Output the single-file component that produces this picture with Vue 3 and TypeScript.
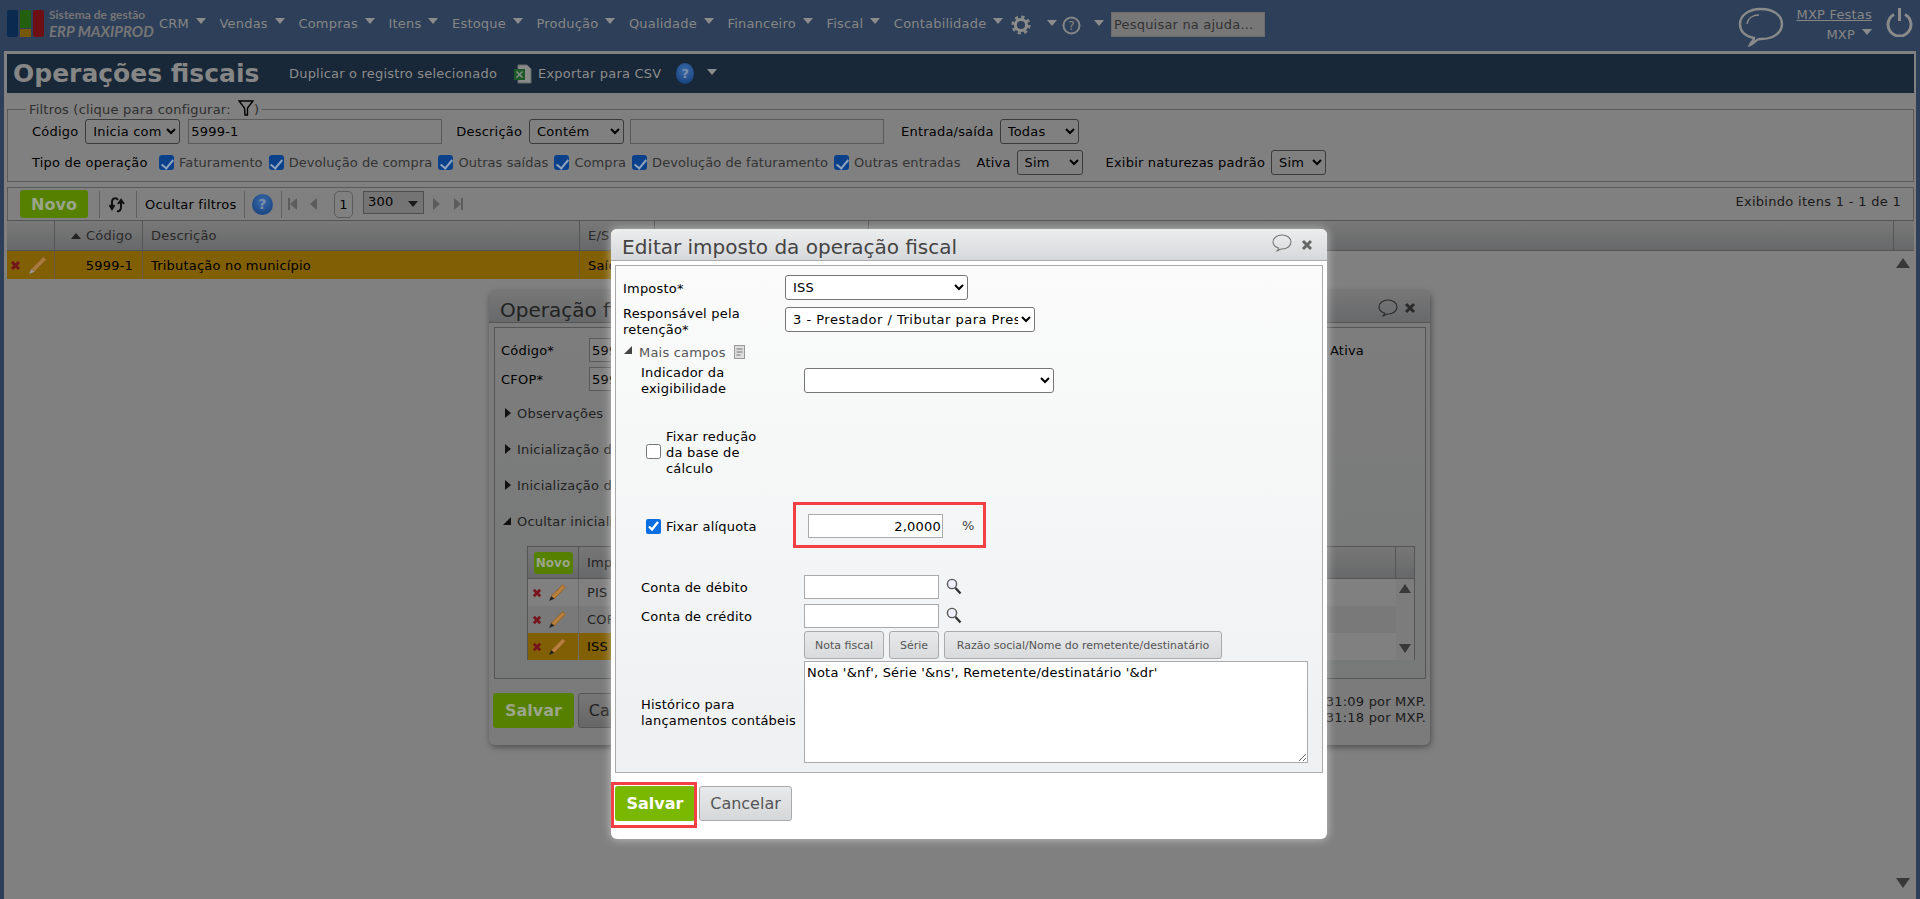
<script setup lang="ts">
const menus: string[] = ['CRM', 'Vendas', 'Compras', 'Itens', 'Estoque', 'Produção', 'Qualidade', 'Financeiro', 'Fiscal', 'Contabilidade']
const tipos: string[] = ['Faturamento', 'Devolução de compra', 'Outras saídas', 'Compra', 'Devolução de faturamento', 'Outras entradas']
const impostos: { nome: string; cls: string }[] = [
  { nome: 'PIS', cls: '' },
  { nome: 'COFINS', cls: 'alt' },
  { nome: 'ISS', cls: 'sel' }
]
const secoes: string[] = ['Observações', 'Inicialização de campos', 'Inicialização de campos']
</script>

<template>
  <div class="page">
    <header class="topbar">
      <div class="logo">
        <span class="bar blue"></span>
        <span class="bar mid"><i class="g"></i><i class="y"></i></span>
        <span class="bar red"></span>
      </div>
      <div class="brand">
        <span class="b1">Sistema de gestão</span>
        <span class="b2">ERP MAXIPROD</span>
      </div>
      <nav class="menu">
        <span v-for="m in menus" :key="m" class="mi">{{ m }}<i class="caret"></i></span>
      </nav>
      <svg class="gear" width="20" height="20" viewBox="0 0 20 20">
        <circle cx="10" cy="10" r="7.6" fill="none" stroke="#868686" stroke-width="4" stroke-dasharray="3 2.97" />
        <circle cx="10" cy="10" r="5.6" fill="none" stroke="#8c8c8c" stroke-width="3" />
      </svg>
      <i class="caret c-gear"></i>
      <svg class="qm" width="19" height="19" viewBox="0 0 19 19">
        <circle cx="9.5" cy="9.5" r="8" fill="none" stroke="#868686" stroke-width="2" />
        <text x="9.5" y="14" text-anchor="middle" font-size="12" fill="#868686" font-family="DejaVu Sans">?</text>
      </svg>
      <i class="caret c-qm"></i>
      <input class="help-search" placeholder="Pesquisar na ajuda..." />
      <div class="top-right">
        <svg width="46" height="40" viewBox="0 0 46 40">
          <path d="M13 36 C15 34 16 33 16 31 C7 29 2 24 2 17 C2 8 11 2 23 2 C35 2 44 8 44 17 C44 26 35 32 23 32 C21 32 20 32 19 33 C17 35 15 37 12 38 Z" fill="none" stroke="#8a8a8a" stroke-width="2.4" />
          <path d="M9 17 C10 11 15 8 21 8" fill="none" stroke="#8a8a8a" stroke-width="1.4" />
        </svg>
        <div class="user">
          <a class="u1">MXP Festas</a>
          <span class="u2">MXP<i class="caret"></i></span>
        </div>
        <svg class="power" width="27" height="30" viewBox="0 0 27 30">
          <path d="M8 7.5 A11.5 11.5 0 1 0 19 7.5" fill="none" stroke="#8a8a8a" stroke-width="3" />
          <path d="M13.5 1 V14" stroke="#8a8a8a" stroke-width="3" />
        </svg>
      </div>
    </header>

    <main class="frame">
      <div class="titlebar">
        <h1 class="ttl">Operações fiscais</h1>
        <span class="tl a1">Duplicar o registro selecionado</span>
        <svg class="xls" width="19" height="20" viewBox="0 0 19 20">
          <path d="M5 1 H14 L18 5 V19 H5 Z" fill="#8a8a8a" stroke="#666" />
          <rect x="1" y="5" width="11" height="11" fill="#1c5a28" />
          <path d="M3.5 7.5 L9.5 13.5 M9.5 7.5 L3.5 13.5" stroke="#8a8a8a" stroke-width="1.5" />
        </svg>
        <span class="tl a2">Exportar para CSV</span>
        <span class="qball q-title">?</span>
        <i class="caret c-title"></i>
      </div>

      <fieldset class="filters">
        <legend class="lg">Filtros (clique para configurar:
          <svg class="funnel" width="16" height="16" viewBox="0 0 16 16">
            <path d="M1 1 H15 L9.5 8 V15 H7 L6.5 8 Z" fill="none" stroke="#000" stroke-width="1.4" />
          </svg>)</legend>
        <div class="frow r1">
          <span>Código</span>
          <select class="ctl s1"><option>Inicia com</option></select>
          <input class="inp i1" value="5999-1" />
          <span class="m17">Descrição</span>
          <select class="ctl s2"><option>Contém</option></select>
          <input class="inp i2" />
          <span class="m18">Entrada/saída</span>
          <select class="ctl s3"><option>Todas</option></select>
        </div>
        <div class="frow r2">
          <span class="tipo">Tipo de operação</span>
          <label v-for="t in tipos" :key="t" class="ck"><input type="checkbox" checked /><span>{{ t }}</span></label>
          <span class="ativa">Ativa</span>
          <select class="ctl s4"><option>Sim</option></select>
          <span class="exibir">Exibir naturezas padrão</span>
          <select class="ctl s5"><option>Sim</option></select>
        </div>
      </fieldset>

      <div class="toolbar">
        <button class="novo">Novo</button>
        <span class="sep s-a"></span>
        <svg class="refresh" width="18" height="18" viewBox="0 0 18 18">
          <path d="M9 5 C7 2 3 3 3 7 V13 M0.5 10 L3 14 L5.5 10" fill="none" stroke="#111" stroke-width="2" />
          <path d="M8 16 C11 17 12 14 12 12 V6 M9 9 L12 5 L15 9" fill="none" stroke="#111" stroke-width="2" />
        </svg>
        <span class="sep s-b"></span>
        <span class="ocultar">Ocultar filtros</span>
        <span class="sep s-c"></span>
        <span class="qball q-tool">?</span>
        <span class="sep s-d"></span>
        <i class="pg first"></i>
        <i class="pg prev"></i>
        <span class="pnum">1</span>
        <span class="psize">300<i class="pcaret"></i></span>
        <i class="pg next"></i>
        <i class="pg last"></i>
        <span class="exibindo">Exibindo itens 1 - 1 de 1</span>
      </div>

      <div class="grid ghead">
        <div></div>
        <div class="hc"><i class="up"></i>Código</div>
        <div class="hc">Descrição</div>
        <div class="hc">E/S</div>
        <div class="hc"></div>
        <div class="hc"></div>
        <div></div>
      </div>
      <div class="grid grow">
        <div class="acts">
          <svg width="11" height="11" viewBox="0 0 11 11"><path d="M2 2 L9 9 M9 2 L2 9" stroke="#76141c" stroke-width="3" /></svg>
          <svg width="20" height="20" viewBox="0 0 18 18"><path d="M14 1.5 L16.5 4 L6 15 L3 12.5 Z" fill="#a87a3c" stroke="#8a5c20" stroke-width=".8" /><path d="M3 12.5 L1 17 L6 15 Z" fill="#999" /></svg>
        </div>
        <div class="rc num">5999-1</div>
        <div class="rc">Tributação no município</div>
        <div class="rc">Saída</div>
        <div class="rc"></div>
      </div>
      <i class="arrow-up"></i>
      <i class="arrow-down"></i>
    </main>

    <section class="dlg dlg2">
      <div class="dhead"><span class="dtitle">Operação fiscal</span></div>
      <div class="dpanel">
        <div class="drow first-row">
          <span class="dlabel">Código*</span><input class="inp di" value="5999-1" />
          <span class="ativa2">Ativa</span>
        </div>
        <div class="drow cfop-row">
          <span class="dlabel">CFOP*</span><input class="inp di" value="5999" />
        </div>
        <div v-for="s in secoes" :key="s" class="sec"><i class="tri-r"></i>{{ s }}</div>
        <div class="sec open"><i class="tri-d"></i>Ocultar inicialização</div>
        <div class="itable">
          <div class="igrid ihead">
            <div class="ic1"><button class="novo-s">Novo</button></div>
            <div class="ic2">Imposto</div>
            <div></div>
            <div class="ic3"></div>
          </div>
          <div v-for="i in impostos" :key="i.nome" class="igrid irow" :class="i.cls">
            <div class="ic1 iacts">
              <svg width="10" height="10" viewBox="0 0 11 11"><path d="M2 2 L9 9 M9 2 L2 9" stroke="#76141c" stroke-width="3" /></svg>
              <svg width="19" height="19" viewBox="0 0 18 18"><path d="M14 1.5 L16.5 4 L6 15 L3 12.5 Z" fill="#b8803c" stroke="#8a5c20" stroke-width=".8" /><path d="M3 12.5 L1 17 L6 15 Z" fill="#222" /></svg>
            </div>
            <div class="ic2">{{ i.nome }}</div>
            <div></div>
            <div class="ic3"></div>
          </div>
          <i class="ia up2"></i>
          <i class="ia down2"></i>
        </div>
      </div>
      <div class="dfoot">
        <button class="salvar2">Salvar</button>
        <button class="cancel2">Cancelar</button>
        <div class="stamps"><span>Criado em 12/05/2021 às 14:31:09 por MXP.</span><span>Alterado em 12/05/2021 às 14:31:18 por MXP.</span></div>
      </div>
      <svg class="dchat" width="20" height="19" viewBox="0 0 20 19">
        <path d="M5 17 C6 16 6.5 15 6.5 14 C3 13 1 11 1 8 C1 4 5 1 10 1 C15 1 19 4 19 8 C19 12 15 15 10 15 C9 15 8 15 7.5 15.5 C7 16.5 6 17 5 17 Z" fill="none" stroke="#2a2a2a" stroke-width="1.1" />
      </svg>
      <svg class="dx" width="12" height="12" viewBox="0 0 12 12"><path d="M2 2 L10 10 M10 2 L2 10" stroke="#2a2a2a" stroke-width="3" /></svg>
    </section>

    <section class="dlg dlg1">
      <div class="mhead">
        <span class="mtitle">Editar imposto da operação fiscal</span>
        <svg class="mchat" width="20" height="19" viewBox="0 0 20 19">
          <path d="M5 17 C6 16 6.5 15 6.5 14 C3 13 1 11 1 8 C1 4 5 1 10 1 C15 1 19 4 19 8 C19 12 15 15 10 15 C9 15 8 15 7.5 15.5 C7 16.5 6 17 5 17 Z" fill="none" stroke="#777" stroke-width="1.1" />
        </svg>
        <svg class="mx" width="12" height="12" viewBox="0 0 12 12"><path d="M2 2 L10 10 M10 2 L2 10" stroke="#666" stroke-width="3" /></svg>
      </div>
      <div class="mpanel">
        <div class="mrow">
          <span class="ml">Imposto*</span>
          <select class="ctl mc sel-a"><option>ISS</option></select>
        </div>
        <div class="mrow mt7">
          <span class="ml two">Responsável pela retenção*</span>
          <select class="ctl mc sel-b"><option>3 - Prestador / Tributar para Prestador</option></select>
        </div>
        <div class="mais"><i class="tri-d small"></i><span>Mais campos</span>
          <svg class="doc" width="11" height="14" viewBox="0 0 11 14"><rect x="0.5" y="0.5" width="10" height="13" fill="#ddd" stroke="#999" /><path d="M2.5 4 H8.5 M2.5 7 H8.5 M2.5 10 H6.5" stroke="#777" /></svg>
        </div>
        <div class="sub">
          <div class="srow ind">
            <span class="sl">Indicador da exigibilidade</span>
            <select class="ctl mc sel-c"><option></option></select>
          </div>
          <label class="fix-red"><input type="checkbox" /><span>Fixar redução da base de cálculo</span></label>
          <div class="srow aliq">
            <label class="fix-al sl"><input type="checkbox" checked /><span>Fixar alíquota</span></label>
            <input class="minp num-in" value="2,0000" /><span class="pct">%</span>
          </div>
          <div class="srow conta">
            <span class="sl low">Conta de débito</span><input class="minp small-in" />
            <svg class="lens" width="16" height="17" viewBox="0 0 16 17"><circle cx="6" cy="6" r="4.6" fill="#eef" stroke="#555" stroke-width="1.4" /><path d="M9.5 10 L14.5 15.5" stroke="#333" stroke-width="2.4" /></svg>
          </div>
          <div class="srow conta2">
            <span class="sl low">Conta de crédito</span><input class="minp small-in" />
            <svg class="lens" width="16" height="17" viewBox="0 0 16 17"><circle cx="6" cy="6" r="4.6" fill="#eef" stroke="#555" stroke-width="1.4" /><path d="M9.5 10 L14.5 15.5" stroke="#333" stroke-width="2.4" /></svg>
          </div>
          <div class="chips">
            <button class="chip c1">Nota fiscal</button>
            <button class="chip c2">Série</button>
            <button class="chip c3">Razão social/Nome do remetente/destinatário</button>
          </div>
          <div class="srow hist">
            <span class="sl low">Histórico para lançamentos contábeis</span>
            <textarea class="ta">Nota '&amp;nf', Série '&amp;ns', Remetente/destinatário '&amp;dr'</textarea>
          </div>
        </div>
      </div>
      <div class="mfoot">
        <button class="salvar">Salvar</button>
        <button class="cancelar">Cancelar</button>
      </div>
      <div class="redbox rb1"></div>
      <div class="redbox rb2"></div>
    </section>
  </div>
</template>

<style>
html, body { margin: 0; background: #2e4059; }
</style>

<style scoped>
.page { position: relative; width: 1920px; height: 899px; overflow: hidden; background: #2e4059; font: 13px "DejaVu Sans", sans-serif; letter-spacing: .2px; color: #000; }
.page * { box-sizing: border-box; }

.topbar { display: flex; align-items: flex-start; height: 51px; padding: 10px 0 0 7px; color: #868686; }
.logo { display: flex; gap: 2px; width: 37px; height: 27px; }
.bar { width: 11px; height: 27px; border-radius: 2px; display: block; }
.blue { background: #0a2b4f; }
.red { background: #6e0f14; }
.mid { display: flex; flex-direction: column; gap: 1px; width: 11px; }
.mid .g { height: 18px; background: #235f0f; border-radius: 2px 2px 0 0; }
.mid .y { height: 8px; background: #775808; }
.brand { display: flex; flex-direction: column; margin-left: 5px; width: 100px; font-family: Lato, sans-serif; font-weight: 700; color: #757575; letter-spacing: 0; }
.b1 { font-size: 12px; line-height: 12px; margin-top: -1px; }
.b2 { font-size: 15px; line-height: 15px; margin-top: 3px; font-style: italic; white-space: nowrap; }
.menu { display: flex; margin-left: 10px; padding-top: 6px; }
.mi { display: flex; align-items: flex-start; margin-right: 13.6px; line-height: 16px; white-space: nowrap; }
.caret { display: inline-block; width: 0; height: 0; border-left: 5px solid transparent; border-right: 5px solid transparent; border-top: 6px solid #8c8c8c; }
.mi .caret { margin: 2px 0 0 7px; }
.gear { margin: 5px 0 0 -6px; }
.c-gear { margin: 10px 0 0 16px; }
.qm { margin: 6px 0 0 5px; }
.c-qm { margin: 10px 0 0 13px; }
.help-search { width: 154px; height: 25px; margin: 2px 0 0 7px; border: 1px solid #6c6c6c; background: #777; font: 13px "DejaVu Sans", sans-serif; letter-spacing: .2px; padding: 0 2px; outline: 0; }
.help-search::placeholder { color: #333; opacity: 1; }
.top-right { display: flex; margin-left: auto; align-items: flex-start; margin-top: -3px; }
.user { display: flex; flex-direction: column; align-items: flex-end; margin-left: 12px; width: 76px; line-height: 16px; }
.u1 { text-decoration: underline; white-space: nowrap; }
.u2 { margin-top: 4px; display: flex; }
.u2 .caret { margin: 2px 0 0 7px; }
.power { margin: 0 7px 0 14px; }

.frame { position: relative; height: 848px; margin: 0 4px; background: #808080; border-top: 3px solid #808080; border-left: 3px solid #808080; border-right: 2px solid #808080; }
.titlebar { display: flex; align-items: center; height: 39px; background: #182838; color: #8c8c8c; }
.ttl { margin: 0 0 0 6px; width: 276px; font-size: 25px; font-weight: 700; color: #868686; white-space: nowrap; letter-spacing: 0; }
.xls { margin-left: 16px; }
.tl { white-space: nowrap; }
.a2 { margin-left: 6px; }
.qball { display: flex; align-items: center; justify-content: center; border-radius: 50%; background: radial-gradient(circle at 50% 35%, #3a6aa8, #123a78); color: #7d8fa8; font-weight: 700; }
.q-title { width: 18px; height: 21px; margin-left: 15px; font-size: 13px; }
.c-title { margin-left: 13px; margin-top: -3px; }

.filters { margin: 7px 0 0; padding: 0 0 7px 24px; height: 82px; width: 1907px; border: 1px solid #5a5a5a; min-width: 0; }
.lg { margin-left: -6px; padding: 0 3px; color: #2e2e2e; line-height: 16px; white-space: nowrap; }
.funnel { vertical-align: -2px; margin-left: 3px; }
.frow { display: flex; align-items: center; white-space: nowrap; }
.r1 { margin-top: 1px; height: 25px; }
.r2 { margin-top: 6px; height: 25px; }
.ctl { height: 25px; border: 1px solid #3b3b3b; border-radius: 3px; background: #808080; color: #000; font: 13px "DejaVu Sans", sans-serif; letter-spacing: .2px; padding: 0 0 0 3px; }
.inp { height: 25px; border: 1px solid #5a5a5a; background: #808080; font: 13px "DejaVu Sans", sans-serif; letter-spacing: .2px; padding: 0 2px; outline: 0; color: #000; }
.s1 { width: 95px; margin-left: 7px; }
.i1 { width: 254px; margin-left: 8px; }
.m17 { margin-left: 14px; }
.s2 { width: 95px; margin-left: 7px; }
.i2 { width: 254px; margin-left: 6px; }
.m18 { margin-left: 17px; }
.s3 { width: 79px; margin-left: 6px; }
.tipo { width: 114px; margin-right: 13px; }
.ck { display: flex; align-items: center; color: #333; margin-right: 6px; letter-spacing: .07px; }
.ck input { appearance: none; position: relative; width: 15px; height: 15px; margin: 0 5px 0 0; border-radius: 3px; background: #0a418a; }
.ck input::after { content: ""; position: absolute; left: 4.5px; top: 1.5px; width: 5px; height: 10px; border: solid #8fa3bd; border-width: 0 2px 2px 0; transform: rotate(40deg); }
.ativa { margin-left: 10px; }
.s4 { width: 66px; margin-left: 6px; }
.exibir { margin-left: 23px; }
.s5 { width: 55px; margin-left: 6px; }

.toolbar { display: flex; align-items: center; height: 33px; margin-top: 5px; border: 1px solid #5a5a5a; border-width: 1px 1px 0; width: 1907px; padding-left: 12px; }
.novo { width: 68px; height: 28px; border: 0; border-radius: 3px; background: #558000; color: #9aa58a; font: 700 16px "DejaVu Sans", sans-serif; padding: 0; }
.sep { width: 1px; height: 27px; background: #606060; }
.s-a { margin-left: 11px; }
.refresh { margin-left: 9px; }
.s-b { margin-left: 9px; }
.ocultar { margin-left: 8px; width: 91px; white-space: nowrap; }
.s-c { margin-left: 8px; }
.q-tool { width: 21px; height: 21px; margin-left: 7px; font-size: 14px; }
.s-d { margin-left: 8px; }
.pg { display: inline-block; width: 0; height: 0; border-top: 6px solid transparent; border-bottom: 6px solid transparent; }
.first { margin-left: 8px; border-right: 7px solid #5c5c5c; box-shadow: -2px 0 0 0 #5c5c5c; }
.prev { margin-left: 13px; border-right: 7px solid #5c5c5c; }
.pnum { margin-left: 17px; width: 19px; height: 27px; border: 1px solid #5c5c5c; border-radius: 5px; display: flex; align-items: center; justify-content: center; }
.psize { margin-left: 10px; width: 61px; height: 23px; background: #747474; border: 1px solid #4e4e4e; padding-left: 4px; line-height: 19px; position: relative; margin-top: -3px; }
.pcaret { position: absolute; right: 5px; top: 9px; border-left: 5px solid transparent; border-right: 5px solid transparent; border-top: 6px solid #1a1a1a; }
.next { margin-left: 9px; border-left: 7px solid #5c5c5c; }
.last { margin-left: 14px; border-left: 7px solid #5c5c5c; box-shadow: 2px 0 0 0 #5c5c5c; }
.exibindo { margin-left: auto; margin-right: 12px; margin-top: -6px; white-space: nowrap; color: #1a1a1a; letter-spacing: .3px; }

.grid { display: grid; grid-template-columns: 48px 88px 437px 75px 214px 1025px 20px; width: 1907px; }
.ghead { height: 31px; background: linear-gradient(#797979, #676869); border: 1px solid #555; border-width: 1px 0; }
.ghead > div { border-right: 1px solid #555; }
.ghead > div:last-child { border-right: 0; }
.hc { display: flex; align-items: center; padding-left: 8px; color: #2a2a2a; }
.up { width: 0; height: 0; border-left: 5px solid transparent; border-right: 5px solid transparent; border-bottom: 6px solid #222; margin: 0 5px 0 8px; }
.grow { height: 28px; }
.grow > div { background: #805f05; border-right: 1px solid #6a5a3a; }
.grow > div:last-child { border-right: 0; }
.acts { display: flex; align-items: center; gap: 7px; padding-left: 3px; }
.rc { display: flex; align-items: center; padding-left: 8px; white-space: nowrap; }
.num { justify-content: flex-end; padding-right: 9px; }
.arrow-up { position: absolute; right: 4px; top: 204px; border-left: 7px solid transparent; border-right: 7px solid transparent; border-bottom: 10px solid #383838; }
.arrow-down { position: absolute; right: 4px; bottom: 11px; border-left: 7px solid transparent; border-right: 7px solid transparent; border-top: 10px solid #383838; }

.dlg { position: absolute; border-radius: 6px; }
.dlg2 { left: 489px; top: 291px; width: 941px; height: 454px; background: #7b7b7b; box-shadow: 1px 2px 6px rgba(0,0,0,.4); }
.dhead { height: 32px; background: linear-gradient(#777778, #68696a); border-bottom: 1px solid #555; border-radius: 6px 6px 0 0; padding-left: 11px; }
.dtitle { font-size: 20px; line-height: 38px; color: #222; letter-spacing: 0; }
.dchat { position: absolute; right: 32px; top: 8px; }
.dx { position: absolute; right: 14px; top: 11px; }
.dpanel { position: relative; margin: 4px 4px 0 5px; height: 352px; border: 1px solid #555; background: linear-gradient(#7d7d7d, #777878); padding: 10px 0 0 6px; }
.drow { display: flex; align-items: center; height: 24px; }
.cfop-row { margin-top: 5px; }
.dlabel { width: 88px; }
.di { width: 200px; height: 24px; }
.ativa2 { position: absolute; right: 5px; top: 15px; width: 90px; }
.sec { position: relative; height: 36px; padding-left: 16px; line-height: 16px; color: #222; display: flex; align-items: flex-start; white-space: nowrap; }
.cfop-row + .sec { margin-top: 15px; }
.tri-r { position: absolute; left: 4px; top: 2px; border-top: 5px solid transparent; border-bottom: 5px solid transparent; border-left: 6px solid #111; }
.tri-d { position: absolute; left: 2px; top: 3px; border-left: 8px solid transparent; border-bottom: 8px solid #111; }
.open { height: 32px; }
.itable { position: relative; margin-left: 26px; width: 888px; height: 114px; border: 1px solid #555; }
.igrid { display: grid; grid-template-columns: 51px 400px 417px 18px; }
.ihead { height: 32px; background: linear-gradient(#777, #676869); border-bottom: 1px solid #555; }
.ihead > div { border-right: 1px solid #555; }
.ihead > div:nth-child(2), .ihead > div:last-child { border-right: 0; }
.ic2 { display: flex; align-items: center; padding-left: 8px; white-space: nowrap; color: #222; }
.ic1 { display: flex; align-items: center; justify-content: center; }
.novo-s { width: 39px; height: 22px; background: #558000; color: #9aa58a; border: 0; border-radius: 3px; font: 700 12px "DejaVu Sans", sans-serif; padding: 0; letter-spacing: 0; }
.irow { height: 27px; background: #808080; }
.irow .ic1 { border-right: 1px solid #6c6c6c; justify-content: flex-start; padding-left: 4px; }
.alt { background: #797979; }
.sel .ic1, .sel .ic2 { background: #805f05; color: #000; }
.irow .ic3 { background: #7c7c7c; }
.iacts { gap: 6px; }
.ia { position: absolute; right: 3px; }
.up2 { top: 37px; border-left: 6px solid transparent; border-right: 6px solid transparent; border-bottom: 9px solid #383838; }
.down2 { bottom: 6px; border-left: 6px solid transparent; border-right: 6px solid transparent; border-top: 9px solid #383838; }
.dfoot { display: flex; align-items: flex-start; margin: 14px 4px 0 4px; }
.salvar2 { width: 81px; height: 35px; background: #558000; color: #9aa58a; border: 0; border-radius: 3px; font: 700 16px "DejaVu Sans", sans-serif; }
.cancel2 { width: 92px; height: 35px; margin-left: 4px; background: linear-gradient(#777, #666); color: #222; border: 1px solid #555; border-radius: 3px; font: 16px "DejaVu Sans", sans-serif; }
.stamps { margin-left: auto; display: flex; flex-direction: column; align-items: flex-end; line-height: 16px; color: #1a1a1a; margin-top: 1px; white-space: nowrap; }

.dlg1 { left: 611px; top: 229px; width: 716px; height: 610px; background: #fff; box-shadow: 0 0 10px rgba(255,255,255,.55); }
.mhead { display: flex; align-items: center; height: 32px; background: linear-gradient(#eceded, #d6d8db); border-bottom: 1px solid #aaa; border-radius: 6px 6px 0 0; padding-left: 11px; }
.mtitle { font-size: 20px; color: #444; margin-top: 5px; white-space: nowrap; letter-spacing: 0; }
.mchat { margin-left: auto; margin-top: -3px; }
.mx { margin: 1px 14px 0 9px; }
.mpanel { margin: 4px 4px 0; width: 708px; border: 1px solid #aaa; background: linear-gradient(#fafbfa, #eff0f2); padding: 9px 0 9px 7px; }
.mrow { display: flex; height: 25px; }
.mt7 { margin-top: 7px; }
.ml { width: 162px; line-height: 16px; padding-top: 6px; }
.two { padding-top: 0; margin-top: -1px; height: 32px; padding-right: 30px; }
.mc { background: #fff; border-color: #767676; }
.sel-a { width: 183px; }
.sel-b { width: 250px; letter-spacing: .5px; }
.mais { position: relative; display: flex; align-items: center; height: 24px; margin-top: 8px; padding-left: 16px; color: #555; }
.tri-d.small { left: 1px; top: 6px; border-left-width: 8px; border-bottom-width: 8px; border-bottom-color: #444; }
.doc { margin-left: 8px; }
.sub { margin-left: 18px; margin-top: 4px; }
.srow { display: flex; align-items: center; }
.ind { height: 25px; }
.sl { width: 163px; line-height: 16px; flex: none; }
.low { margin-top: 2px; }
.sel-c { width: 250px; }
.fix-red { display: flex; align-items: center; margin: 36px 0 0 5px; width: 115px; line-height: 16px; }
.fix-red input, .fix-al input { width: 15px; height: 15px; margin: 0 5px 0 0; flex: none; accent-color: #0b6ee0; }
.fix-red input { margin-top: -3px; }
.fix-al { display: flex; align-items: center; padding-left: 5px; white-space: nowrap; }
.fix-al span { margin-top: 2px; }
.minp { height: 24px; border: 1px solid #aaa; background: #fff; font: 13px "DejaVu Sans", sans-serif; letter-spacing: .2px; outline: 0; padding: 0 1px; color: #000; }
.aliq { margin-top: 37px; height: 24px; }
.num-in { width: 135px; margin-left: 4px; text-align: right; }
.pct { margin-left: 19px; color: #444; margin-top: -2px; }
.small-in { width: 135px; }
.conta { margin-top: 37px; height: 24px; }
.conta2 { margin-top: 5px; height: 24px; }
.lens { margin: -2px 0 0 7px; }
.chips { display: flex; margin: 3px 0 0 163px; }
.chip { height: 28px; border: 1px solid #aaa; border-radius: 3px; background: linear-gradient(#e8e9ea, #d8dadc); color: #555; font: 11px "DejaVu Sans", sans-serif; padding: 0; white-space: nowrap; }
.c1 { width: 80px; }
.c2 { width: 50px; margin-left: 5px; }
.c3 { width: 278px; margin-left: 5px; }
.hist { margin-top: 2px; }
.ta { display: block; width: 504px; height: 102px; border: 1px solid #aaa; background: #fff; font: 13px "DejaVu Sans", sans-serif; letter-spacing: .2px; padding: 3px 2px; outline: 0; color: #000; }
.mfoot { display: flex; margin: 13px 0 0 4px; }
.salvar { width: 80px; height: 35px; background: #7ab800; color: #fff; border: 0; border-radius: 3px; font: 700 16px "DejaVu Sans", sans-serif; padding: 0; }
.cancelar { width: 93px; height: 35px; margin-left: 4px; background: linear-gradient(#e8e9ea, #d5d7d9); color: #555; border: 1px solid #aaa; border-radius: 3px; font: 16px "DejaVu Sans", sans-serif; padding: 0; }
.redbox { position: absolute; border: 3px solid #f44044; pointer-events: none; }
.rb1 { left: 182px; top: 273px; width: 193px; height: 46px; }
.rb2 { left: 0; top: 553px; width: 86px; height: 46px; }
</style>
